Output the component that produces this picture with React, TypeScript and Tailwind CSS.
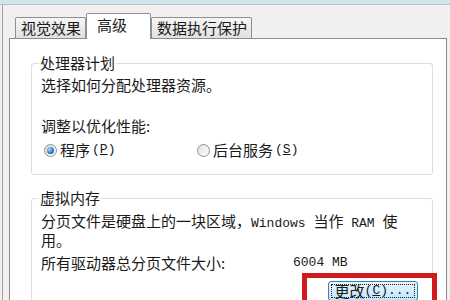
import React from "react";

const cjk = "font-['Noto_Sans_CJK_SC','Noto_Sans',sans-serif]";
const mono = "font-['Liberation_Mono',monospace] text-[13px]";

function Radio({ checked }: { checked?: boolean }) {
  return (
    <span className="w-[13px] h-[13px] rounded-full border border-[#8e9396] bg-[linear-gradient(135deg,#d9d9d9,#ffffff)] flex items-center justify-center shrink-0">
      {checked ? (
        <span className="w-[7px] h-[7px] rounded-full bg-[radial-gradient(circle_at_35%_35%,#a8dcff,#2a73c0_60%,#164e94)]" />
      ) : (
        <span className="w-[9px] h-[9px] rounded-full bg-[linear-gradient(135deg,#e4e4e4,#fbfbfb)]" />
      )}
    </span>
  );
}

export default function App() {
  return (
    <div className={`w-[450px] h-[300px] overflow-hidden bg-[#f0f0f0] relative text-[15px] text-[#1a1a1a] ${cjk}`}>
      <div className="h-[5px] bg-[#d2e5ec] border-b border-[#b6c4ca]" />
      <div className="ml-[2px] h-[295px] border-l border-[#a3a3a3] pl-[6px] pr-[3px] flex flex-col">
        <div className="h-[33px] flex items-end pl-[6px] relative z-10 shrink-0">
          <div className="w-[71px] h-[21px] border border-b-0 border-[#8e9194] rounded-t-[2px] bg-[linear-gradient(#f6f6f6,#e1e1e1)] pl-[5px] leading-[20px]">
            视觉效果
          </div>
          <div className="w-[65px] h-[26px] -mb-px border border-b-0 border-[#8e9194] rounded-t-[2px] bg-white pl-[10px] leading-[22px]">
            高级
          </div>
          <div className="w-[101px] h-[21px] border border-b-0 border-[#8e9194] rounded-t-[2px] bg-[linear-gradient(#f6f6f6,#e1e1e1)] pl-[5px] leading-[20px]">
            数据执行保护
          </div>
        </div>
        <div className="flex-1 border border-b-0 border-[#898c95] bg-white pt-[15px] pl-[21px] pr-[13px]">
          <fieldset className="border border-[#d5dfe5] rounded-[3px] px-[9px] pb-[15px]">
            <legend className="-ml-[2px] px-[1px] leading-[18px]">处理器计划</legend>
            <p className="mt-[4px] leading-[18px]">选择如何分配处理器资源。</p>
            <p className="mt-[23px] leading-[18px]">调整以优化性能:</p>
            <div className="mt-[6px] h-[18px] flex items-center leading-[18px]">
              <div className="w-[156px] flex items-center pl-[3px]">
                <Radio checked />
                <span className="ml-[3px]">程序</span>
                <span className={`${mono} ml-[2px]`}>
                  (<span className="underline">P</span>)
                </span>
              </div>
              <div className="flex items-center">
                <Radio />
                <span className="ml-[3px]">后台服务</span>
                <span className={`${mono} ml-[2px]`}>
                  (<span className="underline">S</span>)
                </span>
              </div>
            </div>
          </fieldset>
          <fieldset className="mt-[14px] border border-[#d5dfe5] rounded-[3px] px-[9px] pb-[15px]">
            <legend className="-ml-[2px] px-[1px] leading-[18px]">虚拟内存</legend>
            <p className="mt-[6px] leading-[16px]">
              分页文件是硬盘上的一块区域，<span className={mono}>Windows </span>当作<span className={mono}> RAM </span>使
              <br />
              用。
            </p>
            <div className="mt-[7px] leading-[16px] flex items-center">
              <span className="w-[252px]">所有驱动器总分页文件大小:</span>
              <span className={mono}>6004 MB</span>
            </div>
            <div className="mt-[10px] flex justify-end pr-[5px]">
              <div className="w-[90px] h-[20px] rounded-[3px] border border-[#3c7fb1] bg-[linear-gradient(#eaf6fd,#bee6fd)] p-[2px]">
                <div className="h-full border border-dotted border-[#222] flex items-center justify-center leading-[14px]">
                  <span>更改</span>
                  <span className={mono}>(<span className="underline">C</span>)...</span>
                </div>
              </div>
            </div>
          </fieldset>
        </div>
      </div>
      <div className="absolute left-[302px] top-[273px] w-[135px] h-[40px] border-[5px] border-[#cf1b1f]" />
    </div>
  );
}
